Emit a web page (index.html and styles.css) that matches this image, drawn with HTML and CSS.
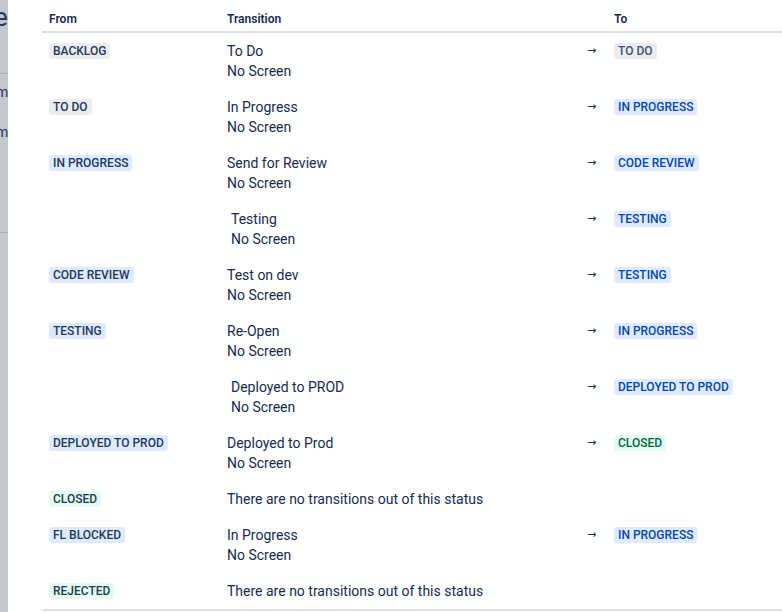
FILE: index.html
```html
<!DOCTYPE html>
<html>
<head>
<meta charset="utf-8">
<link rel="stylesheet" href="styles.css">
</head>
<body>
<div class="page">
  <div class="backdrop">
    <div class="bd-title">e</div>
    <div class="bd-rule bd-rule-1"></div>
    <div class="bd-item bd-item-1">m</div>
    <div class="bd-item bd-item-2">m</div>
    <div class="bd-rule bd-rule-2"></div>
  </div>
  <div class="modal">
    <table class="trans">
      <colgroup>
        <col class="c-from"><col class="c-trans"><col class="c-arrow"><col class="c-to">
      </colgroup>
      <thead>
        <tr><th>From</th><th>Transition</th><th></th><th>To</th></tr>
      </thead>
      <tbody>
        <tr>
          <td><span class="loz loz-gray">BACKLOG</span></td>
          <td>To Do<br>No Screen</td>
          <td class="arrow">→</td>
          <td><span class="loz loz-gray-t">TO DO</span></td>
        </tr>
        <tr>
          <td><span class="loz loz-gray">TO DO</span></td>
          <td>In Progress<br>No Screen</td>
          <td class="arrow">→</td>
          <td><span class="loz loz-blue-t">IN PROGRESS</span></td>
        </tr>
        <tr>
          <td><span class="loz loz-blue">IN PROGRESS</span></td>
          <td>Send for Review<br>No Screen</td>
          <td class="arrow">→</td>
          <td><span class="loz loz-blue-t">CODE REVIEW</span></td>
        </tr>
        <tr>
          <td></td>
          <td class="sub">Testing<br>No Screen</td>
          <td class="arrow">→</td>
          <td><span class="loz loz-blue-t">TESTING</span></td>
        </tr>
        <tr>
          <td><span class="loz loz-blue">CODE REVIEW</span></td>
          <td>Test on dev<br>No Screen</td>
          <td class="arrow">→</td>
          <td><span class="loz loz-blue-t">TESTING</span></td>
        </tr>
        <tr>
          <td><span class="loz loz-blue">TESTING</span></td>
          <td>Re-Open<br>No Screen</td>
          <td class="arrow">→</td>
          <td><span class="loz loz-blue-t">IN PROGRESS</span></td>
        </tr>
        <tr>
          <td></td>
          <td class="sub">Deployed to PROD<br>No Screen</td>
          <td class="arrow">→</td>
          <td><span class="loz loz-blue-t">DEPLOYED TO PROD</span></td>
        </tr>
        <tr>
          <td><span class="loz loz-blue">DEPLOYED TO PROD</span></td>
          <td>Deployed to Prod<br>No Screen</td>
          <td class="arrow">→</td>
          <td><span class="loz loz-green-t">CLOSED</span></td>
        </tr>
        <tr>
          <td><span class="loz loz-green">CLOSED</span></td>
          <td colspan="3">There are no transitions out of this status</td>
        </tr>
        <tr>
          <td><span class="loz loz-blue">FL BLOCKED</span></td>
          <td>In Progress<br>No Screen</td>
          <td class="arrow">→</td>
          <td><span class="loz loz-blue-t">IN PROGRESS</span></td>
        </tr>
        <tr class="last">
          <td><span class="loz loz-green">REJECTED</span></td>
          <td colspan="3">There are no transitions out of this status</td>
        </tr>
      </tbody>
    </table>
  </div>
</div>
</body>
</html>
```
FILE: styles.css
```css
html, body {
  margin: 0;
  padding: 0;
  background: #ffffff;
  overflow: hidden;
}
body {
  font-family: Roboto, "Noto Sans", sans-serif;
  color: #172b4d;
  font-size: 14px;
}
.page {
  display: flex;
  width: 782px;
  height: 612px;
}
.backdrop {
  position: relative;
  width: 8px;
  flex: 0 0 8px;
  background: #c3c7cf;
  overflow: hidden;
}
.bd-title {
  position: absolute;
  top: 2px;
  left: -6px;
  font-size: 26px;
  color: #253858;
  line-height: 30px;
}
.bd-rule {
  position: absolute;
  left: 0;
  width: 8px;
  height: 1px;
  background: #a9aeb8;
}
.bd-rule-1 { top: 73px; }
.bd-rule-2 { top: 232px; }
.bd-item {
  position: absolute;
  left: -4px;
  font-size: 14px;
  line-height: 16px;
  color: #253858;
}
.bd-item-1 { top: 84px; }
.bd-item-2 { top: 124px; }

.modal {
  flex: 1;
  background: #ffffff;
  padding-left: 34px;
  box-shadow: -1px 0 2px rgba(9, 30, 66, 0.15);
}
.trans {
  border-collapse: collapse;
  table-layout: fixed;
  width: 740px;
}
.c-from { width: 178px; }
.c-trans { width: 360px; }
.c-arrow { width: 27px; }
.c-to { width: 175px; }
.trans th {
  text-align: left;
  font-size: 12px;
  font-weight: 600;
  line-height: 16px;
  padding: 11px 7px 4px;
  color: #172b4d;
  border-bottom: 2px solid #dfe1e6;
}
.trans td {
  vertical-align: top;
  padding: 8px 7px 8px;
  line-height: 20px;
  font-size: 14px;
  white-space: nowrap;
}
.trans tr.last td {
  border-bottom: 2px solid #dfe1e6;
}
.trans td.sub {
  padding-left: 11px;
}
.trans td.arrow {
  font-family: "DejaVu Sans", sans-serif;
  font-size: 11px;
  color: #172b4d;
}
.loz {
  display: inline-block;
  vertical-align: top;
  margin-top: 2px;
  padding: 0 4px;
  height: 16px;
  line-height: 16px;
  border-radius: 3px;
  font-size: 12px;
  font-weight: 500;
  letter-spacing: 0;
}
.loz-gray { background: #ebecf0; color: #253858; }
.loz-gray-t { background: #ebecf0; color: #42526e; }
.loz-blue { background: #deebff; color: #253858; }
.loz-blue-t { background: #deebff; color: #0747a6; }
.loz-green { background: #e3fcef; color: #253858; }
.loz-green-t { background: #e3fcef; color: #006644; }
```
